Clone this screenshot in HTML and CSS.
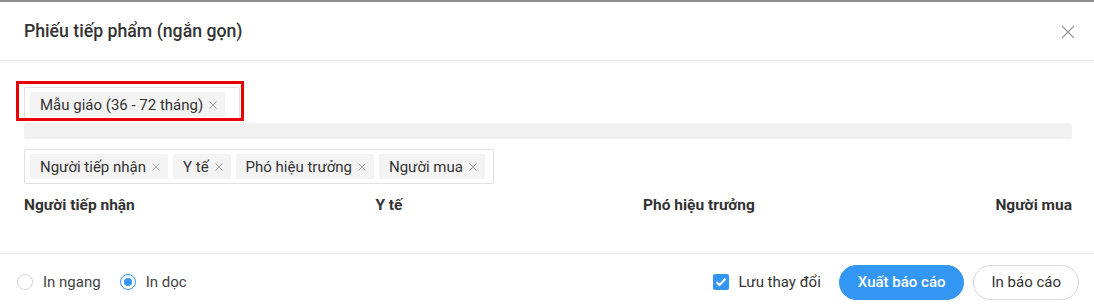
FILE: index.html
```html
<!DOCTYPE html>
<html lang="vi">
<head>
    <meta charset="UTF-8">
    <meta name="viewport" content="width=device-width, initial-scale=1.0">
    <title>Phiếu tiếp phẩm (ngắn gọn)</title>
    <link rel="stylesheet" href="styles.css">
</head>
<body>

    <div class="modal">
        <div class="modal-header">
            <h2>Phiếu tiếp phẩm (ngắn gọn)</h2>
            <span class="close">
                <svg width="14" height="14" viewBox="0 0 14 14"><path d="M1 1L13 13M13 1L1 13" stroke="#999" stroke-width="1.3" fill="none"/></svg>
            </span>
        </div>

        <div class="modal-body">
            <!-- red highlight round the class select -->
            <div class="highlight">
                <div class="tag-select tag-select-short">
                    <span class="tag">Mẫu giáo (36 - 72 tháng)<svg class="tag-x" viewBox="0 0 8 8"><path d="M0.5 0.5L7.5 7.5M7.5 0.5L0.5 7.5"/></svg></span>
                </div>
            </div>
            <div class="gray-bar"></div>

            <div class="tag-select">
                <span class="tag">Người tiếp nhận<svg class="tag-x" viewBox="0 0 8 8"><path d="M0.5 0.5L7.5 7.5M7.5 0.5L0.5 7.5"/></svg></span>
                <span class="tag">Y tế<svg class="tag-x" viewBox="0 0 8 8"><path d="M0.5 0.5L7.5 7.5M7.5 0.5L0.5 7.5"/></svg></span>
                <span class="tag">Phó hiệu trưởng<svg class="tag-x" viewBox="0 0 8 8"><path d="M0.5 0.5L7.5 7.5M7.5 0.5L0.5 7.5"/></svg></span>
                <span class="tag">Người mua<svg class="tag-x" viewBox="0 0 8 8"><path d="M0.5 0.5L7.5 7.5M7.5 0.5L0.5 7.5"/></svg></span>
            </div>

            <div class="signers">
                <span>Người tiếp nhận</span>
                <span>Y tế</span>
                <span>Phó hiệu trưởng</span>
                <span>Người mua</span>
            </div>
        </div>

        <div class="modal-footer">
            <div class="radios">
                <label class="radio"><span class="radio-dot"></span>In ngang</label>
                <label class="radio"><span class="radio-dot checked"></span>In dọc</label>
            </div>
            <div class="actions">
                <label class="check">
                    <span class="check-box">
                        <svg width="12" height="10" viewBox="0 0 12 10"><path d="M1.5 5L4.5 8L10.5 1.8" stroke="#fff" stroke-width="2" fill="none"/></svg>
                    </span>
                    Lưu thay đổi
                </label>
                <button class="btn btn-primary">Xuất báo cáo</button>
                <button class="btn">In báo cáo</button>
            </div>
        </div>
    </div>

</body>
</html>
```

FILE: styles.css
```css
body {
    margin: 0;
    font-family: Roboto, "Noto Sans", Arial, sans-serif;
    color: #333;
    background: #fff;
}
.modal {
    height: 307px;
    border-top: 2px solid #8c8c8c;
    box-sizing: border-box;
    background: #fff;
}
.modal-header {
    height: 58px;
    display: flex;
    align-items: center;
    justify-content: space-between;
    padding: 0 19px 0 24px;
    border-bottom: 1px solid #e8e8e8;
}
.modal-header h2 {
    margin: 0;
    font-size: 17.7px;
    font-weight: 500;
    color: #333;
}
.close {
    display: flex;
    width: 14px;
    height: 14px;
    margin-top: 2px;
}
.modal-body {
    padding: 20px 22px 0 24px;
    height: 192px;
    box-sizing: border-box;
}
.highlight {
    width: 228px;
    height: 40px;
    box-sizing: border-box;
    margin-left: -8px;
    padding: 3px 0 0 5px;
    border: 3px solid #e90000;
    overflow: hidden;
}
.tag-select {
    display: flex;
    flex-wrap: wrap;
    gap: 5px;
    width: max-content;
    padding: 4px 8px 4px 5px;
    border: 1px solid #e0e0e0;
    border-radius: 2px;
    background: #fff;
}
.tag-select-short {
    width: 204px;
    padding-right: 5px;
}
.tag {
    display: inline-flex;
    align-items: center;
    height: 25px;
    padding: 0 8px 0 10px;
    background: #f3f3f3;
    border-radius: 2px;
    font-size: 15px;
    color: #333;
    white-space: nowrap;
}
.tag-x {
    width: 8px;
    height: 8px;
    margin-left: 6px;
    stroke: #aaa;
    stroke-width: 1;
    fill: none;
}
.gray-bar {
    height: 16px;
    margin: 2px 0 10px;
    background: #f1f1f1;
    border-radius: 2px;
}
.signers {
    display: flex;
    justify-content: space-between;
    margin-top: 12px;
    font-size: 15.5px;
    font-weight: 700;
    color: #333;
}
.modal-footer {
    height: 54px;
    box-sizing: border-box;
    border-top: 1px solid #e8e8e8;
    display: flex;
    align-items: center;
    justify-content: space-between;
    padding: 3px 15px 0 17px;
}
.radios {
    display: flex;
    gap: 19px;
}
.radio {
    display: flex;
    align-items: center;
    font-size: 15px;
    color: #444;
}
.radio-dot {
    width: 14px;
    height: 14px;
    border: 1px solid #d6d6d6;
    border-radius: 50%;
    margin-right: 10px;
    position: relative;
}
.radio-dot.checked {
    border-color: #3396f3;
}
.radio-dot.checked::after {
    content: "";
    position: absolute;
    left: 3px;
    top: 3px;
    width: 8px;
    height: 8px;
    border-radius: 50%;
    background: #3396f3;
}
.actions {
    display: flex;
    align-items: center;
}
.check {
    display: flex;
    align-items: center;
    font-size: 15px;
    color: #333;
    margin-right: 9px;
}
.check-box {
    width: 16px;
    height: 16px;
    border-radius: 2px;
    background: #3396f3;
    display: flex;
    align-items: center;
    justify-content: center;
    margin-right: 10px;
}
.btn {
    height: 35px;
    padding: 0 17px;
    border-radius: 18px;
    border: 1px solid #d9d9d9;
    background: #fff;
    color: #333;
    font-family: inherit;
    font-size: 15px;
    margin-left: 9px;
}
.btn-primary {
    background: #3396f3;
    border-color: #3396f3;
    color: #fff;
    font-weight: 500;
    padding: 0 18px;
}
```
